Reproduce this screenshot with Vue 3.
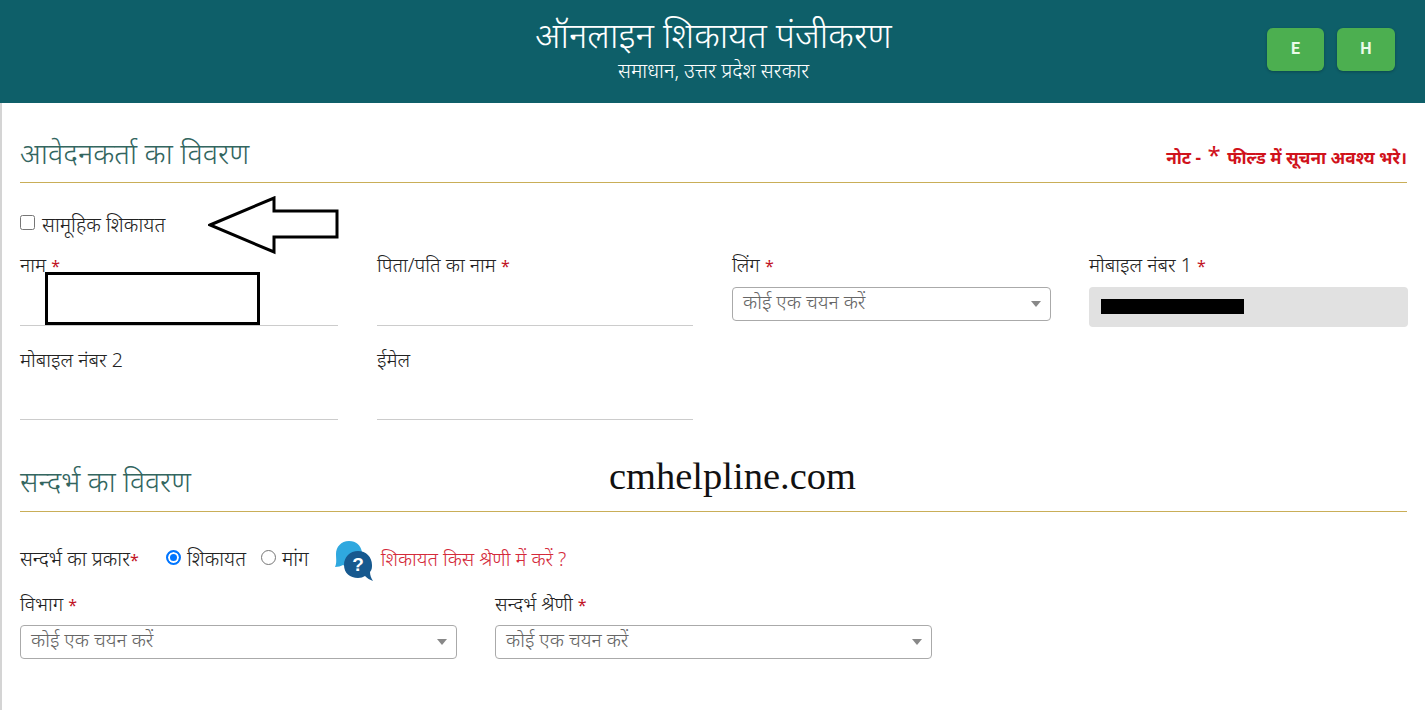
<script setup>
const row1 = [
  { label: 'पिता/पति का नाम', req: true, kind: 'line' },
  { label: 'लिंग', req: true, kind: 'select' },
  { label: 'मोबाइल नंबर 1', req: true, kind: 'locked' },
]
const row2 = [
  { label: 'मोबाइल नंबर 2', kind: 'line' },
  { label: 'ईमेल', kind: 'line' },
]
const placeholder = 'कोई एक चयन करें'
</script>

<template>
  <div class="page">
    <header class="top">
      <div class="top-spacer"></div>
      <div class="titles">
        <h1>ऑनलाइन शिकायत पंजीकरण</h1>
        <p>समाधान, उत्तर प्रदेश सरकार</p>
      </div>
      <div class="langs">
        <button class="lang lang-e">E</button>
        <button class="lang lang-h">H</button>
      </div>
    </header>

    <main class="body">
      <section class="head head-a">
        <h2>आवेदनकर्ता का विवरण</h2>
        <div class="note">नोट - <span class="note-star">*</span> फील्ड में सूचना अवश्य भरे।</div>
      </section>

      <div class="group">
        <label class="check"><span class="box"></span>सामूहिक शिकायत</label>
        <svg class="arrow" width="132" height="60" viewBox="0 0 132 60">
          <path d="M2 29 L66 2 L66 15 L129 15 L129 41 L66 41 L66 56 Z" fill="#fff" stroke="#000" stroke-width="3" />
        </svg>
      </div>

      <div class="grid">
        <div class="field">
          <div class="label">नाम <span class="req">*</span></div>
          <div class="line"></div>
          <div class="redact"></div>
        </div>
        <div v-for="f in row1" :key="f.label" class="field">
          <div class="label">{{ f.label }} <span v-if="f.req" class="req">*</span></div>
          <div v-if="f.kind === 'line'" class="line"></div>
          <div v-else-if="f.kind === 'select'" class="select"><span>{{ placeholder }}</span><i class="caret"></i></div>
          <div v-else class="locked"><span class="bar"></span></div>
        </div>
      </div>

      <div class="grid grid-2">
        <div v-for="f in row2" :key="f.label" class="field">
          <div class="label">{{ f.label }}</div>
          <div class="line"></div>
        </div>
      </div>

      <section class="head head-b">
        <h2>सन्दर्भ का विवरण</h2>
        <div class="mark">cmhelpline.com</div>
      </section>

      <div class="type-row">
        <span class="type-label">सन्दर्भ का प्रकार<span class="req">*</span></span>
        <span class="radio on"></span><span class="opt">शिकायत</span>
        <span class="radio"></span><span class="opt">मांग</span>
        <svg class="help" width="40" height="42" viewBox="0 0 40 42">
          <path d="M15 1 C7 1 2 7 2 14 C2 19 3 23 1 27 C4 27 7 26 9 25 C14 28 20 28 25 25 C31 20 30 1 15 1 Z" fill="#2fa8df" />
          <path d="M24 11 C16 11 10 17 10 25 C10 33 16 38 24 38 C27 38 29 37 31 36 C33 38 36 40 39 41 C37 38 36 35 36 32 C38 30 38 27 38 25 C38 17 32 11 24 11 Z" fill="#17598f" />
          <text x="24" y="31" text-anchor="middle" class="help-q">?</text>
        </svg>
        <span class="help-text">शिकायत किस श्रेणी में करें ?</span>
      </div>

      <div class="dept-row">
        <div class="field">
          <div class="label">विभाग <span class="req">*</span></div>
          <div class="select"><span>{{ placeholder }}</span><i class="caret"></i></div>
        </div>
        <div class="field">
          <div class="label">सन्दर्भ श्रेणी <span class="req">*</span></div>
          <div class="select"><span>{{ placeholder }}</span><i class="caret"></i></div>
        </div>
      </div>
    </main>
  </div>
</template>

<style>
html, body { margin: 0; background: #fff; overflow: hidden; }
</style>

<style scoped>
.page {
  height: 710px;
  box-sizing: border-box;
  font-family: "Noto Sans", "Liberation Sans", sans-serif;
  color: #222;
  font-size: 16px;
}
.top {
  height: 103px;
  background: #0e5f69;
  color: #fff;
  display: flex;
  align-items: flex-start;
}
.top-spacer { width: 158px; flex: none; }
.titles { flex: 1; text-align: center; padding-top: 11px; padding-left: 2px; box-sizing: border-box; }
.titles h1 { margin: 0; font-size: 35.2px; font-weight: 300; line-height: 46px; }
.titles p { margin: 0; font-size: 20.2px; font-weight: 300; line-height: 26px; }
.langs { width: 158px; flex: none; display: flex; gap: 13px; padding-top: 28px; box-sizing: border-box; }
.lang {
  height: 43px;
  border: 0;
  border-radius: 6px;
  background: #4caf50;
  color: #eafbe9;
  font: 700 16px "Roboto", sans-serif;
  box-shadow: 0 1px 3px rgba(0, 0, 0, .25);
  padding: 0 0 3px;
}
.lang-e { width: 57px; }
.lang-h { width: 58px; }

.body {
  height: 607px;
  box-sizing: border-box;
  border-left: 2px solid #d4d4d4;
  padding: 0 18px 0 18px;
}
.head {
  display: flex;
  justify-content: space-between;
  border-bottom: 1px solid #c9ae58;
  position: relative;
}
.head h2 { margin: 0; font-size: 29.1px; font-weight: 300; color: #33665f; line-height: 38px; }
.head-a { height: 80px; box-sizing: border-box; padding-top: 31px; }
.head-b { height: 75px; box-sizing: border-box; margin-top: 17px; padding-top: 25px; }
.head-b h2 { font-size: 28.7px; }
.note { color: #d0121b; font-weight: 700; font-size: 17.2px; padding-top: 12px; white-space: nowrap; }
.note-star { font-size: 24px; line-height: 16px; font-weight: 400; margin: 0 2px; }
.mark {
  position: absolute;
  left: 589px;
  top: 16px;
  font: 38.5px "Liberation Serif", serif;
  color: #111;
  line-height: 46px;
}

.group { position: relative; height: 70px; }
.check { display: flex; align-items: center; gap: 7px; height: 30px; padding-top: 26px; font-size: 20.1px; font-weight: 300; }
.box { width: 15px; height: 15px; border: 1px solid #767676; border-radius: 2.5px; box-sizing: border-box; background: #fff; margin-top: -4px; }
.arrow { position: absolute; left: 188px; top: 13px; }

.grid { display: grid; grid-template-columns: 319px 317px 319px 319px; column-gap: 38px; }
.grid-2 { margin-top: 21px; }
.field { position: relative; }
.label { height: 34px; font-size: 19.6px; font-weight: 300; line-height: 24px; white-space: nowrap; box-sizing: border-box; }
.req { color: #c1121f; font-size: 16px; font-weight: 400; }
.line { height: 38px; margin-right: 1px; border-bottom: 1px solid #ccc; }
.grid-2 .line { height: 37px; }
.redact { position: absolute; left: 25px; top: 19px; width: 215px; height: 53px; box-sizing: border-box; border: 3px solid #000; background: #fff; }
.select {
  height: 34px;
  box-sizing: border-box;
  border: 1px solid #aaa;
  border-radius: 4px;
  display: flex;
  align-items: center;
  justify-content: space-between;
  padding: 0 9px 0 10px;
  color: #666;
  font-size: 19.5px;
  font-weight: 300;
  background: #fff;
}
.select span { margin-top: -5px; }
.caret { width: 0; height: 0; border-left: 5px solid transparent; border-right: 5px solid transparent; border-top: 6px solid #888; }
.locked { height: 40px; background: #e1e1e1; border-radius: 4px; display: flex; align-items: center; padding-left: 12px; }
.bar { width: 143px; height: 15px; background: #000; margin-top: -1px; }

.type-row { display: flex; align-items: center; height: 50px; margin-top: 21px; font-size: 20px; font-weight: 300; }
.type-label { width: 146px; white-space: nowrap; }
.radio { width: 15px; height: 15px; border: 1px solid #767676; border-radius: 50%; box-sizing: border-box; background: #fff; margin-right: 6px; flex: none; margin-top: -2px; }
.radio.on { border: 2px solid #0075ff; box-shadow: inset 0 0 0 2px #fff; background: #0075ff; }
.opt { margin-right: 15px; white-space: nowrap; }
.help { margin: 6px 7px 0 10px; flex: none; }
.help-q { font: 700 19px "Liberation Sans", sans-serif; fill: #fff; }
.help-text { color: #d42a3a; font-size: 19.4px; white-space: nowrap; }

.dept-row { display: grid; grid-template-columns: 437px 437px; column-gap: 38px; margin-top: 6px; }
.dept-row .label { height: 36px; line-height: 30px; }
</style>
